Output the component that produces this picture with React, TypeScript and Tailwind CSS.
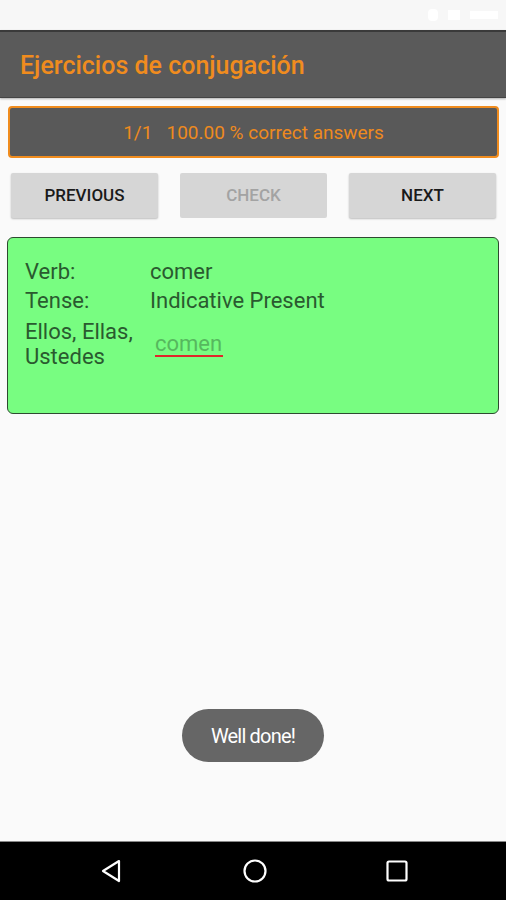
import React from "react";

export default function App() {
  return (
    <div
      className="w-[506px] h-[900px] flex flex-col bg-[#fafafa] relative overflow-hidden"
      style={{ fontFamily: "Roboto, 'Noto Sans', sans-serif" }}
    >
      {/* status bar */}
      <div className="h-[30px] bg-[#f7f7f7] flex items-center justify-end gap-[10px] pr-[8px]">
        <div className="w-[10px] h-[12px] bg-white rounded-sm" />
        <div className="w-[12px] h-[10px] bg-white" />
        <div className="w-[28px] h-[8px] bg-white" />
      </div>
      {/* app bar */}
      <div className="h-[68px] bg-[#5a5a5a] border-t-2 border-[#3a3a3a] border-b border-b-[#444] flex items-center pl-[20px] pt-[2px] shadow-[0_1px_2px_rgba(0,0,0,0.3)]">
        <span className="text-[25px] font-medium text-[#f08c1e] leading-none">Ejercicios de conjugación</span>
      </div>
      {/* score */}
      <div className="mt-[8px] ml-[8px] mr-[7px] h-[52px] bg-[#595959] border-2 border-[#f08c1e] rounded-[4px] flex items-center justify-center pt-[3px]">
        <span className="text-[19px] text-[#ee8a1e] whitespace-pre">1/1   100.00 % correct answers</span>
      </div>
      {/* buttons */}
      <div className="mt-[15px] ml-[11px] mr-[10px] grid grid-cols-3 gap-[22px]">
        <div className="h-[45px] bg-[#d6d6d6] rounded-[2px] shadow-[0_1px_2px_rgba(0,0,0,0.25)] flex items-center justify-center text-[17px] font-medium text-[#1a1a1a]">PREVIOUS</div>
        <div className="h-[45px] bg-[#d6d6d6] rounded-[2px] flex items-center justify-center text-[17px] font-medium text-[#a3a3a3]">CHECK</div>
        <div className="h-[45px] bg-[#d6d6d6] rounded-[2px] shadow-[0_1px_2px_rgba(0,0,0,0.25)] flex items-center justify-center text-[17px] font-medium text-[#1a1a1a]">NEXT</div>
      </div>
      {/* card */}
      <div className="mt-[19px] mx-[7px] h-[177px] bg-[#78fd81] border border-[#2e4a30] rounded-[6px] pl-[17px] pt-[18px] text-[22px] text-[#2a5a2f]">
        <div className="flex h-[30px] items-center">
          <span className="w-[125px]">Verb:</span>
          <span>comer</span>
        </div>
        <div className="flex h-[29px] items-center">
          <span className="w-[125px]">Tense:</span>
          <span>Indicative Present</span>
        </div>
        <div className="flex mt-[4px] items-center">
          <span className="w-[125px] leading-[25px] whitespace-nowrap">
            Ellos, Ellas,
            <br />
            Ustedes
          </span>
          <span className="ml-[5px] text-[#56b85e] border-b-2 border-[#e0262a] leading-[23px] pr-[1px]">comen</span>
        </div>
      </div>
      <div className="flex-1" />
      {/* toast */}
      <div className="absolute left-[182px] top-[709px] w-[142px] h-[53px] rounded-full bg-[#666666] flex items-center justify-center">
        <span className="text-[20px] text-white tracking-[-0.8px]">Well done!</span>
      </div>
      {/* nav bar */}
      <div className="h-[59px] bg-black border-t border-[#888] flex items-center justify-between">
        <svg className="ml-[99px]" width="24" height="26" viewBox="0 0 24 26" fill="none">
          <path d="M20 3 L4 13 L20 23 Z" stroke="white" strokeWidth="2.2" strokeLinejoin="round" />
        </svg>
        <svg width="24" height="24" viewBox="0 0 24 24" fill="none">
          <circle cx="12" cy="12" r="10.5" stroke="white" strokeWidth="2.2" />
        </svg>
        <svg className="mr-[98px]" width="22" height="22" viewBox="0 0 22 22" fill="none">
          <rect x="1.5" y="1.5" width="19" height="19" rx="1.5" stroke="white" strokeWidth="2.2" />
        </svg>
      </div>
    </div>
  );
}
